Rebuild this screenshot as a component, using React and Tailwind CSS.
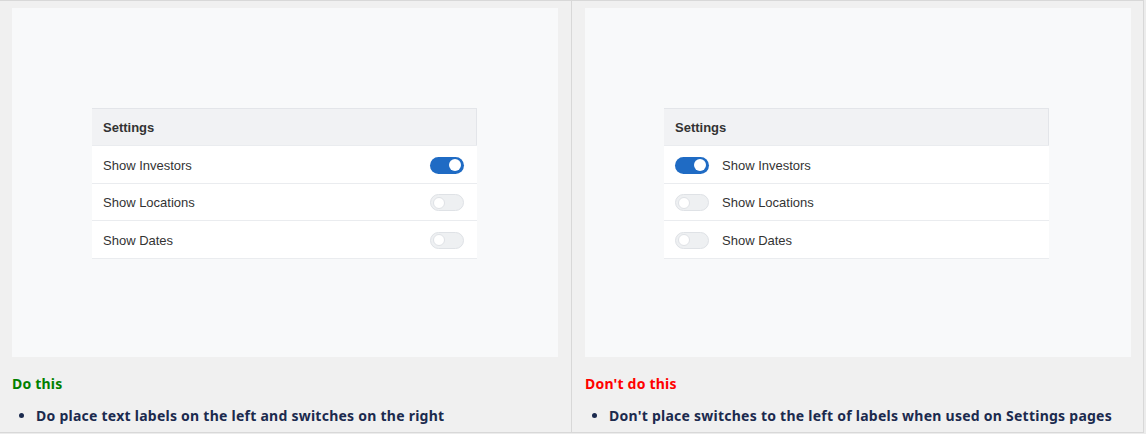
import React from 'react';

const rows = [
  { label: 'Show Investors', on: true },
  { label: 'Show Locations', on: false },
  { label: 'Show Dates', on: false },
];

function Toggle({ on }) {
  return on ? (
    <span className="relative inline-block h-[17px] w-[34px] shrink-0 rounded-full bg-[#1f6bc4]">
      <span className="absolute right-[3px] top-[2.5px] h-3 w-3 rounded-full bg-white" />
    </span>
  ) : (
    <span className="relative inline-block h-[17px] w-[34px] shrink-0 rounded-full border border-[#dfe2e6] bg-[#eef0f2]">
      <span className="absolute left-[2px] top-[1.5px] h-3 w-3 rounded-full border border-[#dfe2e6] bg-white" />
    </span>
  );
}

function SettingsCard({ switchLeft }) {
  return (
    <div className="w-[385px] font-['Liberation_Sans',Arial,sans-serif] text-[13px] text-[#333]">
      <div className="flex h-[37px] items-center border-t border-r border-[#e3e5e9] bg-[#f1f2f4] px-[11px] pt-[2px] font-bold">
        Settings
      </div>
      {rows.map((r) => (
        <div
          key={r.label}
          className={`flex h-[37.5px] items-center border-t border-[#eaecef] bg-white px-[11px] pt-[2px] ${
            switchLeft ? 'gap-[13px]' : 'justify-between pr-[13px]'
          }`}
        >
          {switchLeft && <Toggle on={r.on} />}
          <span>{r.label}</span>
          {!switchLeft && <Toggle on={r.on} />}
        </div>
      ))}
      <div className="h-px bg-[#eaecef]" />
    </div>
  );
}

function Panel({ title, titleColor, tip, switchLeft, className, cardPad }) {
  return (
    <div className={`flex flex-col ${className}`}>
      <div className={`h-[349px] w-[546px] bg-[#f8f9fa] pt-[100px] ${cardPad}`}>
        <SettingsCard switchLeft={switchLeft} />
      </div>
      <div className={`mt-[16px] text-[14px] font-bold tracking-[0.2px] ${titleColor}`}>{title}</div>
      <ul className="mt-[11px] list-disc pl-[24px] text-[14px] font-bold tracking-[0.25px] text-[#1b2a4e]">
        <li>{tip}</li>
      </ul>
    </div>
  );
}

export default function App() {
  return (
    <div className="flex h-[434px] w-[1146px] bg-[#ececec] font-['Noto_Sans','Open_Sans',sans-serif]">
      <div className="flex h-[433px] w-[1144px] border-t border-r border-b border-[#d8d8d8] bg-[#f0f0f0]">
        <Panel
          className="w-[572px] border-r border-[#d8d8d8] pl-[12px] pt-[7px]"
          cardPad="pl-[80px]"
          title="Do this"
          titleColor="text-[#008000]"
          tip="Do place text labels on the left and switches on the right"
        />
        <Panel
          className="flex-1 pl-[13px] pt-[7px]"
          cardPad="pl-[79px]"
          title="Don't do this"
          titleColor="text-[#ff0000]"
          tip="Don't place switches to the left of labels when used on Settings pages"
          switchLeft
        />
      </div>
    </div>
  );
}
